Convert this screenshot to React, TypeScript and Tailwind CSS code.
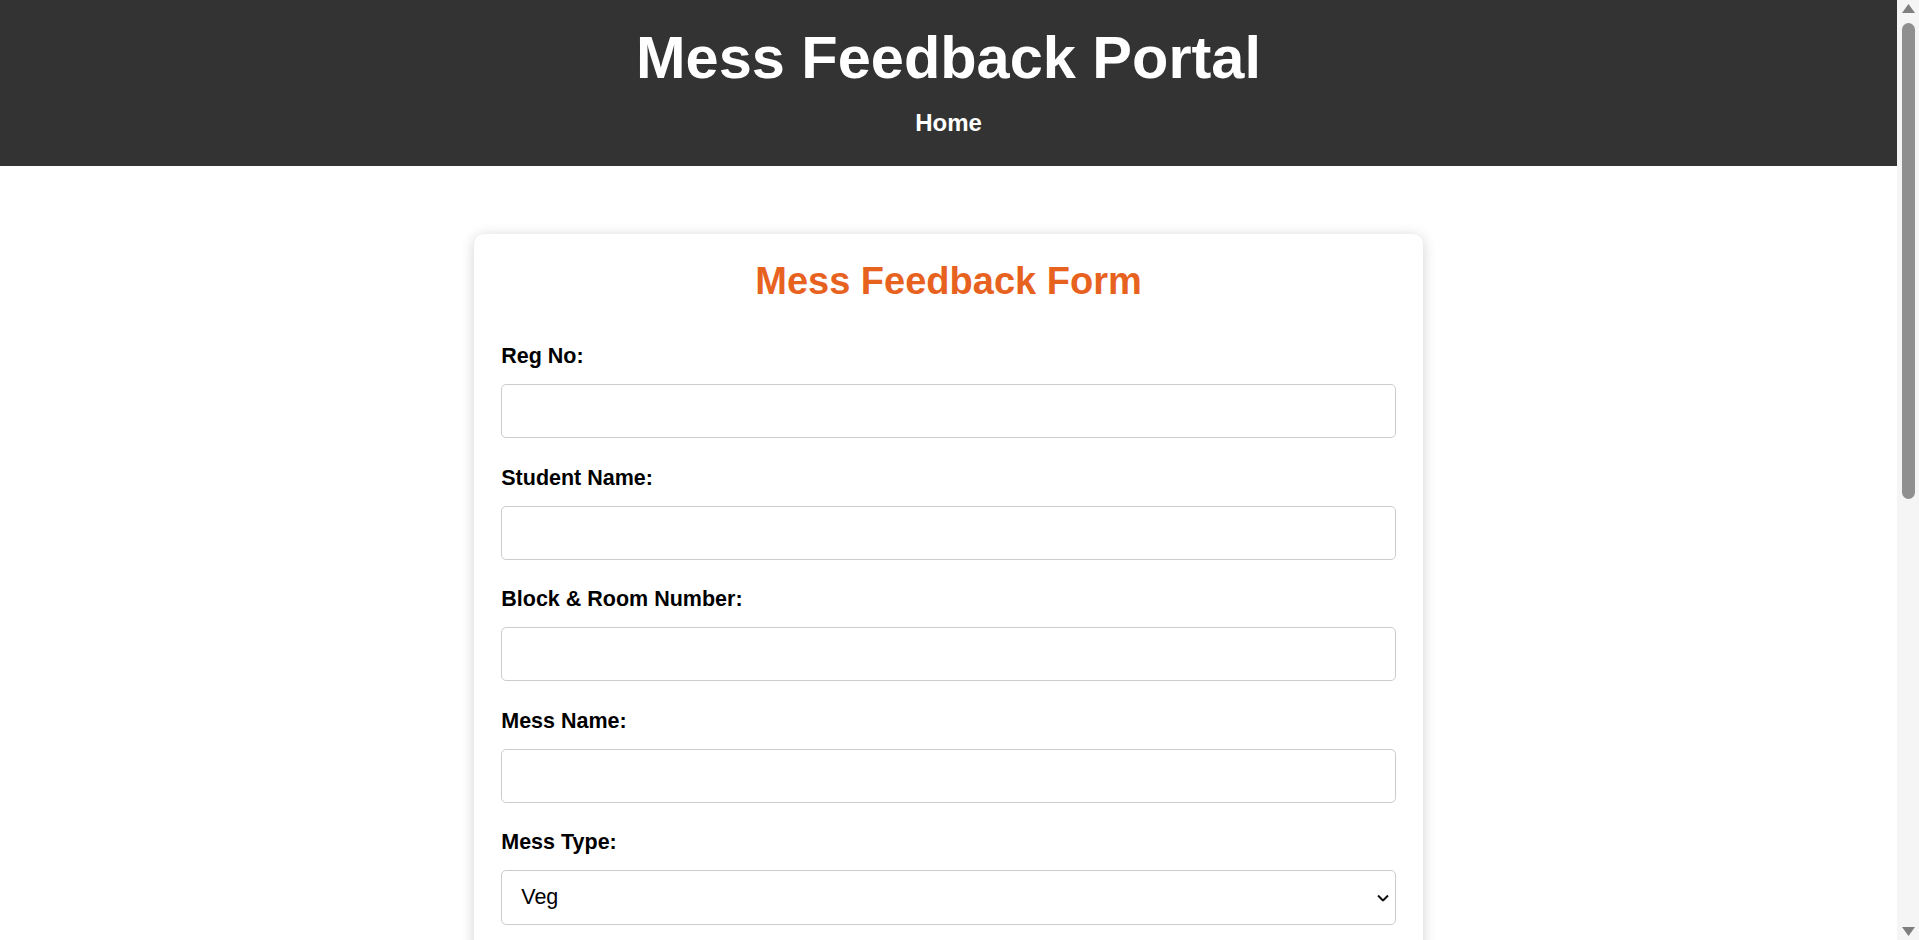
import React from "react";

const fields = [
  { id: "regNo", label: "Reg No:" },
  { id: "studentName", label: "Student Name:" },
  { id: "blockRoom", label: "Block & Room Number:" },
  { id: "messName", label: "Mess Name:" },
];

function Field({ id, label, children }: { id: string; label: string; children: React.ReactNode }) {
  return (
    <div className="mb-[27.5px] flex flex-col">
      <label htmlFor={id} className="mb-[16px] text-[21.5px] font-bold leading-[24px] text-black">
        {label}
      </label>
      {children}
    </div>
  );
}

const inputClass =
  "h-[54px] w-full rounded-[5px] border border-[#cccccc] bg-white px-[16px] text-[21.5px] text-black outline-none";

function Scrollbar() {
  return (
    <div className="flex h-screen w-[22px] shrink-0 flex-col items-center bg-[#f5f5f5]">
      <div className="flex h-[17px] items-center justify-center pl-[1px]">
        <svg width="13" height="9" viewBox="0 0 13 9">
          <polygon points="6.5,0 13,9 0,9" fill="#7f7f7f" />
        </svg>
      </div>
      <div className="mt-[6px] ml-[1px] h-[476px] w-[13px] rounded-full bg-[#8f8f8f]" />
      <div className="flex-1" />
      <div className="flex h-[17px] items-center justify-center pl-[1px]">
        <svg width="13" height="9" viewBox="0 0 13 9">
          <polygon points="0,0 13,0 6.5,9" fill="#7f7f7f" />
        </svg>
      </div>
    </div>
  );
}

export default function App() {
  return (
    <div className="flex h-screen overflow-hidden bg-white font-['Liberation_Sans',Arial,sans-serif]">
      <div className="min-w-0 flex-1">
        <header className="bg-[#333333] pt-[26px] pb-[28px] text-center text-white">
          <h1 className="text-[59.5px] font-bold leading-[64px]">Mess Feedback Portal</h1>
          <nav className="mt-[19px]">
            <a href="#" className="text-[24px] font-bold leading-[28px] text-white">
              Home
            </a>
          </nav>
        </header>

        <main className="pt-[68px] pb-[68px]">
          <form className="mx-auto w-1/2 rounded-[10px] bg-white px-[27px] pt-[25px] pb-[27px] shadow-[0_2px_14px_rgba(0,0,0,0.18)]">
            <h2 className="mb-[41px] text-center text-[38px] font-bold leading-[44px] text-[#e8621f]">
              Mess Feedback Form
            </h2>

            {fields.map((f) => (
              <Field key={f.id} id={f.id} label={f.label}>
                <input id={f.id} type="text" className={inputClass} />
              </Field>
            ))}

            <Field id="messType" label="Mess Type:">
              <div className="relative">
                <select
                  id="messType"
                  className="h-[55px] w-full appearance-none rounded-[5px] border border-[#cccccc] bg-white pr-[30px] pl-[19px] text-[21.5px] text-black outline-none"
                  defaultValue="Veg"
                >
                  <option>Veg</option>
                  <option>Non-Veg</option>
                  <option>Special</option>
                </select>
                <svg
                  width="12"
                  height="7"
                  viewBox="0 0 12 7"
                  className="pointer-events-none absolute top-1/2 right-[7px] -translate-y-1/2"
                >
                  <path d="M1 1l5 5 5-5" fill="none" stroke="#111" strokeWidth="2" />
                </svg>
              </div>
            </Field>

            <Field id="rating" label="Food Quality Rating:">
              <select id="rating" className={inputClass} defaultValue="5">
                <option value="5">Excellent</option>
                <option value="4">Good</option>
                <option value="3">Average</option>
                <option value="2">Poor</option>
              </select>
            </Field>

            <Field id="feedback" label="Feedback:">
              <textarea
                id="feedback"
                rows={4}
                className="h-[120px] w-full rounded-[5px] border border-[#cccccc] p-[16px] text-[21.5px] outline-none"
              />
            </Field>

            <button
              type="submit"
              className="h-[50px] w-full rounded-[5px] bg-[#e8621f] text-[21.5px] font-bold text-white"
            >
              Submit Feedback
            </button>
          </form>
        </main>
      </div>
      <Scrollbar />
    </div>
  );
}
